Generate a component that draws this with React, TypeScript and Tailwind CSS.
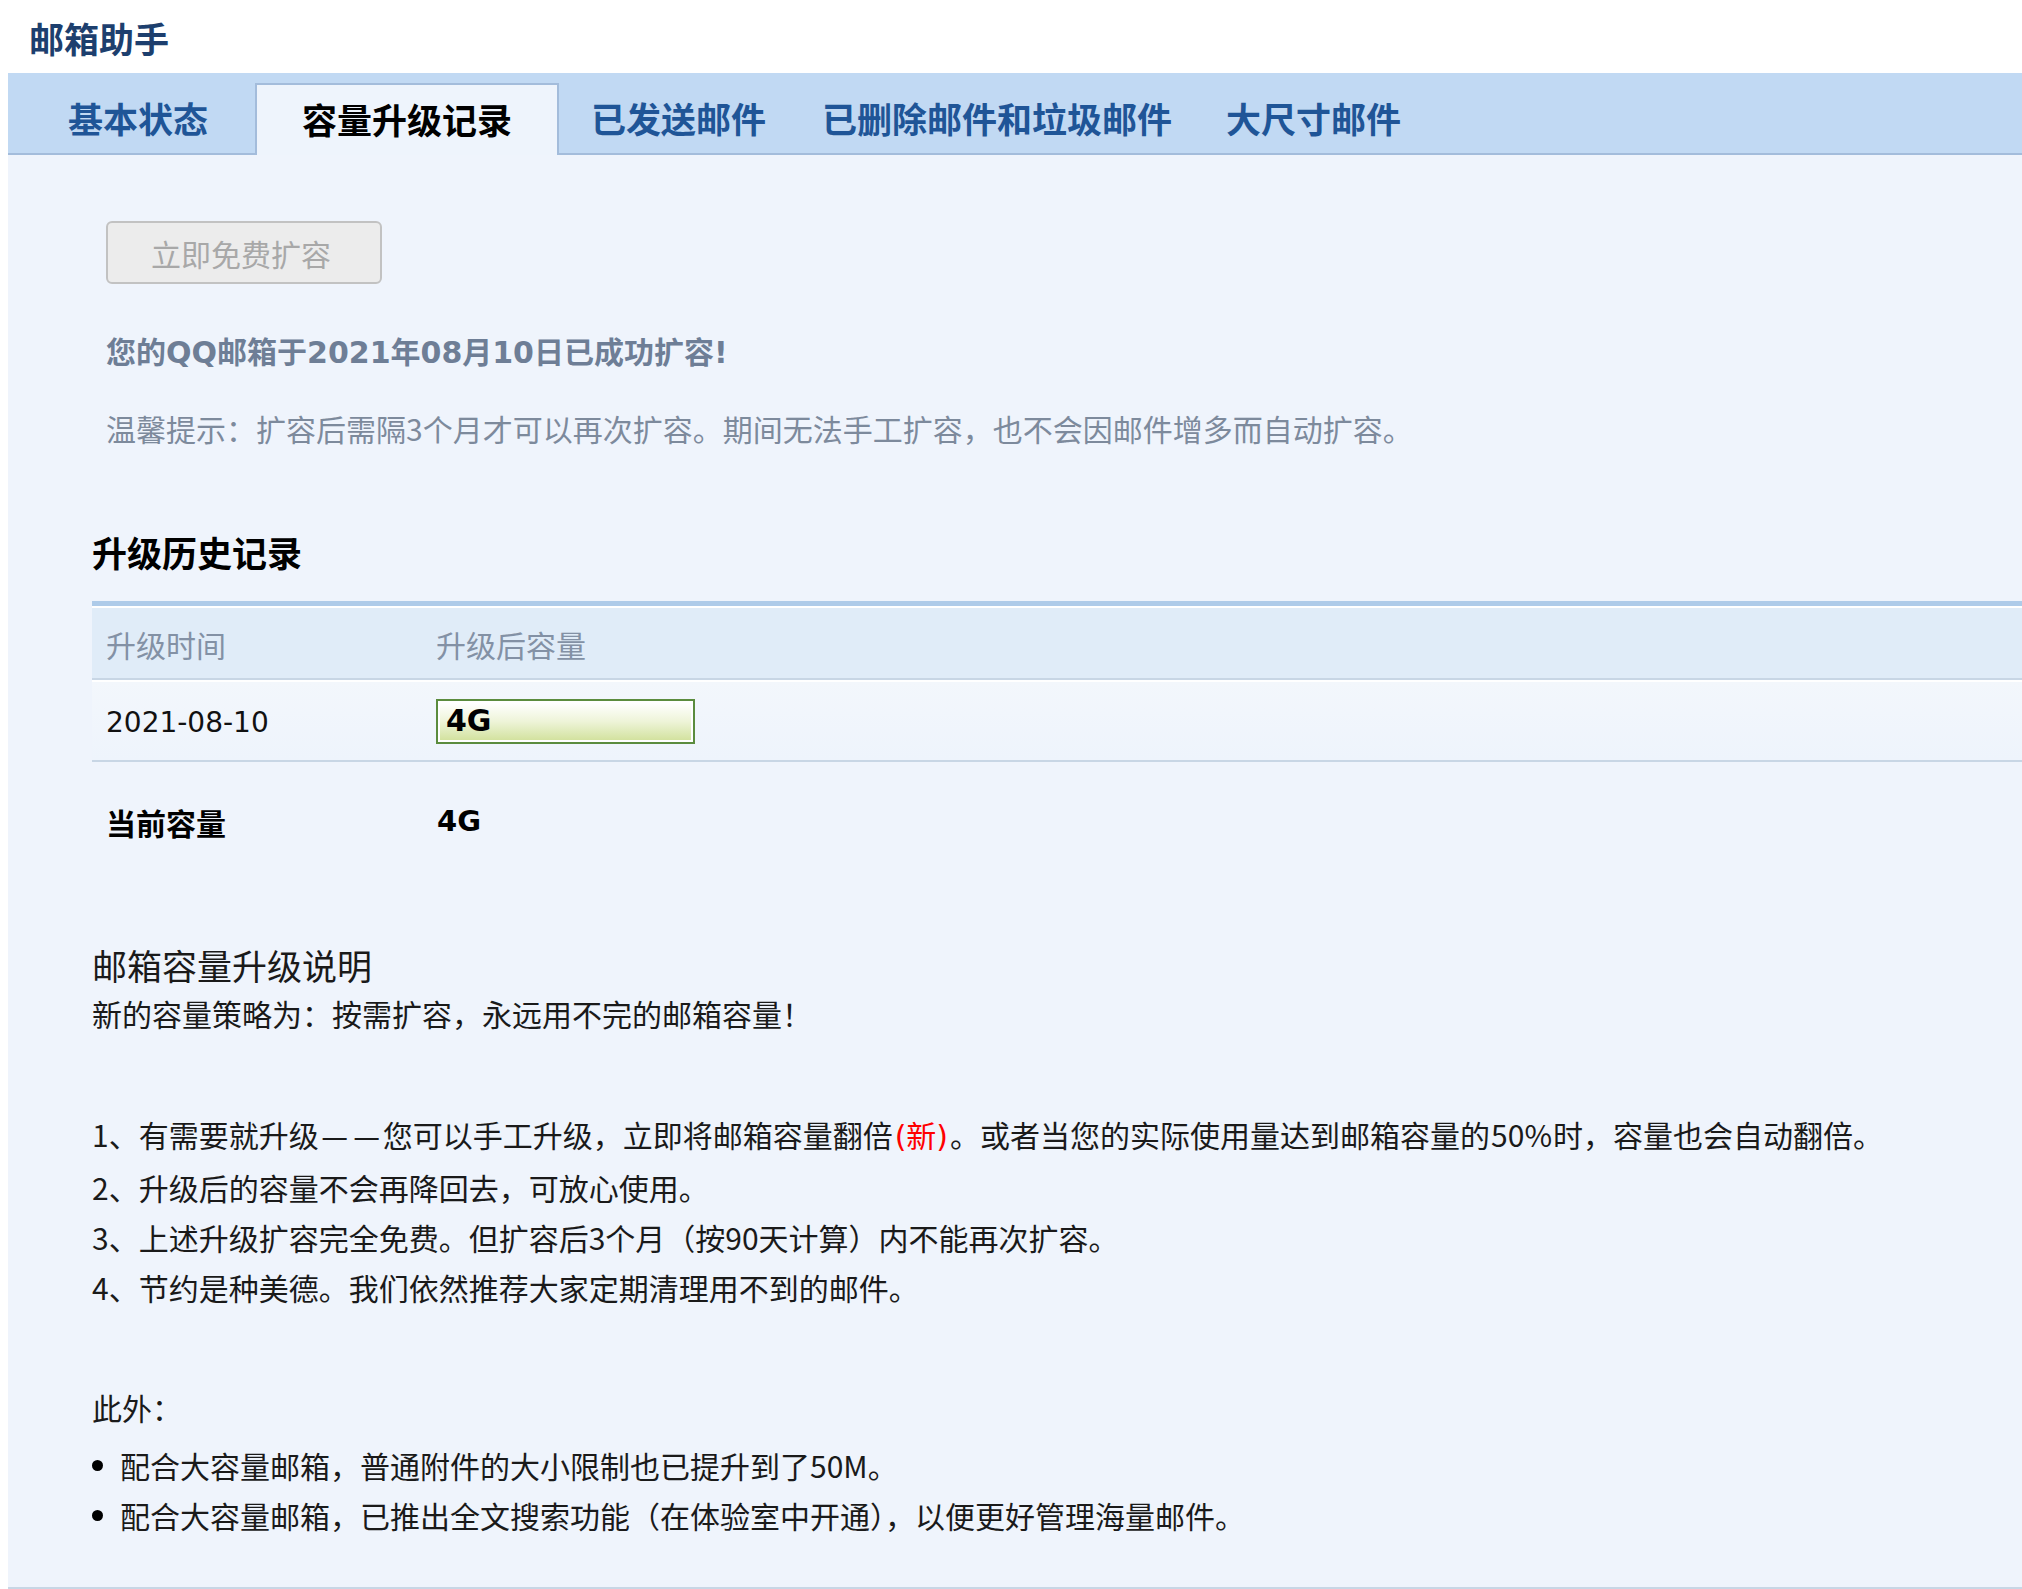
const tabs = [
  { label: '基本状态', active: false, cls: 'ml-0' },
  { label: '容量升级记录', active: true, cls: 'ml-[19px]' },
  { label: '已发送邮件', active: false, cls: 'ml-[4px]' },
  { label: '已删除邮件和垃圾邮件', active: false, cls: 'ml-0' },
  { label: '大尺寸邮件', active: false, cls: '-ml-[2px]' },
];

const rules = [
  '2、升级后的容量不会再降回去，可放心使用。',
  '3、上述升级扩容完全免费。但扩容后3个月（按90天计算）内不能再次扩容。',
  '4、节约是种美德。我们依然推荐大家定期清理用不到的邮件。',
];

const extras = [
  '配合大容量邮箱，普通附件的大小限制也已提升到了50M。',
  '配合大容量邮箱，已推出全文搜索功能（在体验室中开通），以便更好管理海量邮件。',
];

const cjk = "font-['Noto_Sans_CJK_SC',sans-serif]";
const latin = "font-['DejaVu_Sans','Noto_Sans_CJK_SC',sans-serif]";

function TabBar() {
  return (
    <div className="h-[82px] bg-[#c1d9f3] border-b-2 border-[#a3bcdb] flex items-end pl-[32px]">
      {tabs.map((t) =>
        t.active ? (
          <div
            key={t.label}
            className={`${t.cls} h-[72px] -mb-[2px] pb-[2px] px-[45px] flex items-center bg-[#eef4fc] border-2 border-b-0 border-[#a3bcdb] text-[35px] font-bold text-black`}
          >
            {t.label}
          </div>
        ) : (
          <div
            key={t.label}
            className={`${t.cls} h-[72px] -mb-[2px] pb-[2px] px-[28px] flex items-center text-[35px] font-bold text-[#1f5597]`}
          >
            {t.label}
          </div>
        ),
      )}
    </div>
  );
}

function HistoryTable() {
  return (
    <div className="border-t-[5px] border-[#aecbe9]">
      {/* header */}
      <div className="flex h-[74px] items-center pt-[3px] bg-[#e0ecf8] border-t-2 border-t-white border-b-2 border-b-[#c8d6e5] text-[30px] text-[#8391a5]">
        <div className="w-[330px] pl-[14px]">升级时间</div>
        <div className="pl-[14px]">升级后容量</div>
      </div>
      {/* row */}
      <div className="flex h-[82px] items-center border-t-2 border-t-white border-b-2 border-b-[#c8d6e5] bg-gradient-to-b from-[#f3f7fc] to-[#eef4fc]">
        <div className={`w-[330px] pl-[14px] pt-[3px] text-[28px] text-[#111] ${latin}`}>2021-08-10</div>
        <div className="pl-[14px]">
          <div className="w-[259px] h-[45px] border-2 border-[#5b8c3e] p-[2px] bg-white">
            <div className="h-full bg-gradient-to-b from-white via-[#eef4d8] to-[#d3e29f] flex items-center pl-[6px]">
              <span className={`text-[30px] font-bold text-black leading-none ${latin}`}>4G</span>
            </div>
          </div>
        </div>
      </div>
      {/* current */}
      <div className="flex h-[120px] items-center">
        <div className="w-[330px] pl-[14px] text-[30px] font-bold text-black">当前容量</div>
        <div className={`pl-[15px] text-[29px] font-bold text-black ${latin}`}>4G</div>
      </div>
    </div>
  );
}

export default function App() {
  return (
    <div className={`min-h-[1589px] bg-white ${cjk}`}>
      <div className="h-[73px] pl-[29px] pt-[1px] flex items-center">
        <h1 className="text-[35px] font-bold text-[#1d3f6e] leading-none">邮箱助手</h1>
      </div>

      <div className="ml-[8px]">
        <TabBar />

        <div className="bg-[#eff4fc] border-b-2 border-[#c8d6e5] pl-[84px] pt-[66px] pb-[47px]">
          <div className="pl-[14px]">
            <button className="w-[276px] h-[63px] pr-[6px] rounded-[6px] border-2 border-[#c2c2c2] bg-[#ececec] text-[30px] text-[#a8a8a8] leading-none">
              立即免费扩容
            </button>
            <p className={`mt-[49px] h-[40px] leading-[40px] text-[30px] font-bold text-[#6e7e96] ${latin}`}>
              您的QQ邮箱于2021年08月10日已成功扩容!
            </p>
            <p className="mt-[35px] h-[40px] leading-[40px] text-[30px] text-[#7d8a9c]">
              温馨提示：扩容后需隔3个月才可以再次扩容。期间无法手工扩容，也不会因邮件增多而自动扩容。
            </p>
          </div>

          <h2 className="mt-[82px] leading-[44px] text-[35px] font-bold text-black">升级历史记录</h2>
          <div className="mt-[27px]">
            <HistoryTable />
          </div>

          <div className="mt-[59px] text-[#1a1a1a]">
            <h3 className="leading-[48px] text-[35px] font-normal">邮箱容量升级说明</h3>
            <p className="leading-[48px] text-[30px]">新的容量策略为：按需扩容，永远用不完的邮箱容量！</p>

            <div className="mt-[72px] text-[30px] leading-[50px]">
              <p>
                1、有需要就升级<span className="inline-block w-[32px] text-center">—</span>
                <span className="inline-block w-[32px] text-center">—</span>您可以手工升级，立即将邮箱容量翻倍
                <span className={`text-[#ff0000] px-[2px] ${latin}`}>(新)</span>
                。或者当您的实际使用量达到邮箱容量的<span className="px-[1px]">50%</span>时，容量也会自动翻倍。
              </p>
              {rules.map((r) => (
                <p key={r}>{r}</p>
              ))}
            </div>

            <p className="mt-[70px] text-[30px] leading-[50px]">此外：</p>
            <ul className="mt-[8px] text-[30px] leading-[50px]">
              {extras.map((e) => (
                <li key={e} className="flex items-center">
                  <span className="w-[11px] h-[11px] rounded-full bg-black mr-[17px]" />
                  {e}
                </li>
              ))}
            </ul>
          </div>
        </div>
      </div>
    </div>
  );
}
